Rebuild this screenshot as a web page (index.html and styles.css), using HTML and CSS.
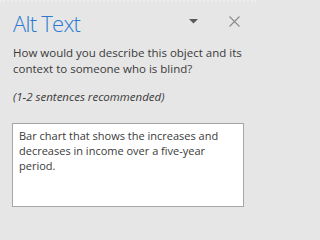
FILE: index.html
```html
<!DOCTYPE html>
<html lang="en">
<head>
<meta charset="utf-8">
<link rel="stylesheet" href="styles.css">
</head>
<body>
<div class="pane">
  <div class="header">
    <h1 class="title">Alt Text</h1>
    <div class="controls">
      <svg class="menu" width="9" height="5" viewBox="0 0 9 5"><polygon points="0,0 9,0 4.5,4.5" fill="#595959"/></svg>
      <svg class="close" width="11" height="11" viewBox="0 0 11 11"><path d="M0.5 0.5 L10.5 10.5 M10.5 0.5 L0.5 10.5" stroke="#8a8a8a" stroke-width="1.1" fill="none"/></svg>
    </div>
  </div>
  <p class="question">How would you describe this object and its context to someone who is blind?</p>
  <p class="hint">(1-2 sentences recommended)</p>
  <div class="box">Bar chart that shows the increases and decreases in income over a five-year period.</div>
</div>
</body>
</html>
```
FILE: styles.css
```css
html, body {
  margin: 0;
  padding: 0;
  background: #e6e6e6;
}
.pane {
  width: 256px;
  height: 226px;
  box-sizing: border-box;
  border-top: 2px dotted #ededed;
  padding: 0 12px 0 13px;
  font-family: "Open Sans", "Noto Sans", sans-serif;
  color: #3a3a3a;
}
.header {
  display: flex;
  align-items: flex-start;
  justify-content: space-between;
  height: 40px;
}
.title {
  margin: 6px 0 0 0;
  font-size: 22px;
  font-weight: 300;
  line-height: 30px;
  letter-spacing: -0.75px;
  color: #2b7bd2;
}
.controls {
  display: flex;
  align-items: flex-start;
  margin-top: 14px;
}
.menu {
  display: block;
  margin-top: 3px;
  margin-right: 31px;
}
.close {
  display: block;
  margin-right: 4px;
}
.question {
  margin: 3px -8px 0 0;
  font-size: 11.5px;
  line-height: 16px;
}
.hint {
  margin: 12px 0 0 0;
  font-size: 11.5px;
  line-height: 16px;
  font-style: italic;
}
.box {
  margin: 18px 0 0 -1px;
  width: 232px;
  height: 84px;
  box-sizing: border-box;
  background: #ffffff;
  border: 1px solid #a6a6a6;
  padding: 3.5px 6px;
  font-size: 11px;
  line-height: 15.2px;
}
```
